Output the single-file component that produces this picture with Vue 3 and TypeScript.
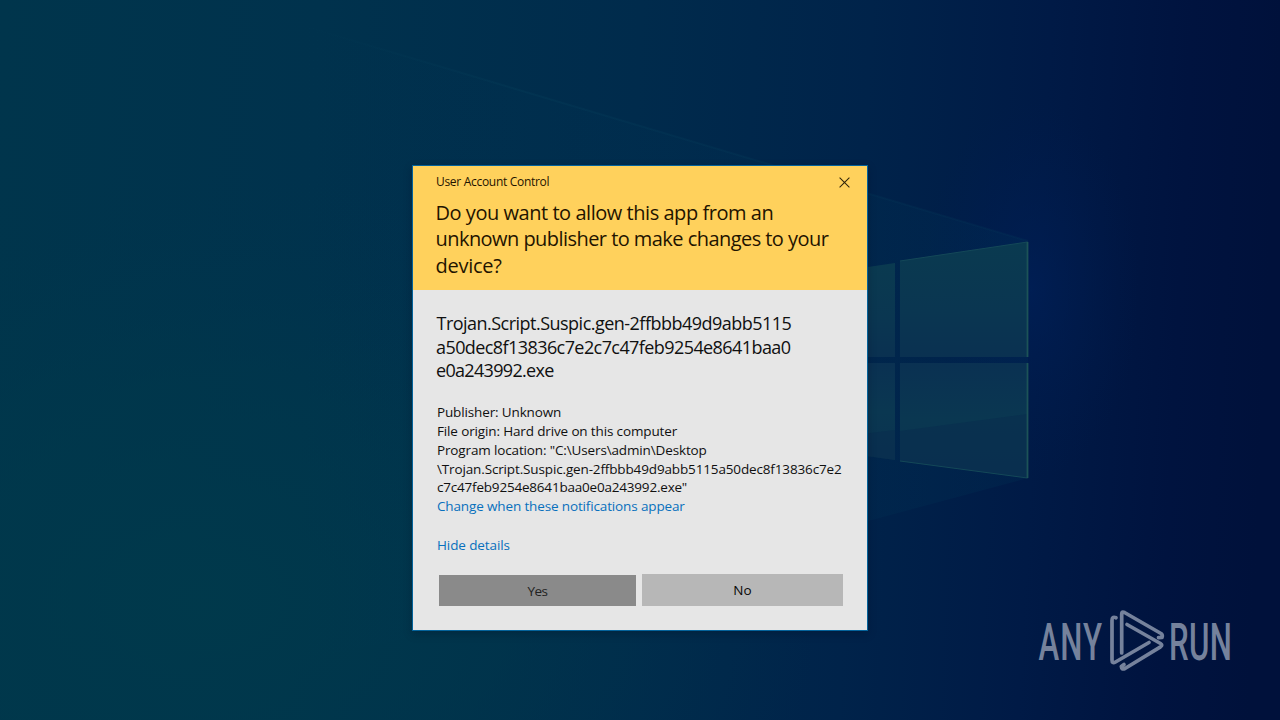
<script setup lang="ts">
const title: string[] = [
  'Do you want to allow this app from an',
  'unknown publisher to make changes to your',
  'device?',
]
const program: string[] = [
  'Trojan.Script.Suspic.gen-2ffbbb49d9abb5115',
  'a50dec8f13836c7e2c7c47feb9254e8641baa0',
  'e0a243992.exe',
]
const details: string[] = [
  'Publisher: Unknown',
  'File origin: Hard drive on this computer',
  'Program location: "C:\\Users\\admin\\Desktop',
  '\\Trojan.Script.Suspic.gen-2ffbbb49d9abb5115a50dec8f13836c7e2',
  'c7c47feb9254e8641baa0e0a243992.exe"',
]
</script>

<template>
  <main class="desktop">
    <svg class="wallpaper" viewBox="0 0 1280 720" aria-hidden="true">
      <defs>
        <linearGradient id="base" x1="0" y1="0" x2="1280" y2="60" gradientUnits="userSpaceOnUse">
          <stop offset="0" stop-color="#00354c" />
          <stop offset=".25" stop-color="#00324d" />
          <stop offset=".5" stop-color="#002b4c" />
          <stop offset=".68" stop-color="#00234a" />
          <stop offset=".82" stop-color="#001a46" />
          <stop offset=".93" stop-color="#00133f" />
          <stop offset="1" stop-color="#00113b" />
        </linearGradient>
        <radialGradient id="teal" cx="0" cy="0" r="1" gradientUnits="userSpaceOnUse" gradientTransform="translate(200 600) scale(620 430)">
          <stop offset="0" stop-color="#003a4b" stop-opacity=".85" />
          <stop offset=".5" stop-color="#00394b" stop-opacity=".5" />
          <stop offset="1" stop-color="#00344b" stop-opacity="0" />
        </radialGradient>
        <radialGradient id="glow" cx="0" cy="0" r="1" gradientUnits="userSpaceOnUse" gradientTransform="translate(1030 290) scale(110 190)">
          <stop offset="0" stop-color="#00205a" stop-opacity=".65" />
          <stop offset="1" stop-color="#001c50" stop-opacity="0" />
        </radialGradient>
        <linearGradient id="ray" x1="300" y1="0" x2="1030" y2="0" gradientUnits="userSpaceOnUse">
          <stop offset="0" stop-color="#003d5c" stop-opacity="0" />
          <stop offset="1" stop-color="#003857" stop-opacity=".22" />
        </linearGradient>
        <linearGradient id="edge" x1="300" y1="0" x2="1030" y2="0" gradientUnits="userSpaceOnUse">
          <stop offset="0" stop-color="#07435d" stop-opacity="0" />
          <stop offset=".3" stop-color="#07435d" stop-opacity=".25" />
          <stop offset="1" stop-color="#053a5a" stop-opacity=".2" />
        </linearGradient>
        <linearGradient id="pane" x1="0" y1="0" x2="0" y2="1">
          <stop offset="0" stop-color="#0a3a50" />
          <stop offset=".6" stop-color="#0a3651" />
          <stop offset="1" stop-color="#0a3151" />
        </linearGradient>
        <linearGradient id="lower-pane" x1="0" y1="0" x2="0" y2="1">
          <stop offset="0" stop-color="#0a3152" />
          <stop offset=".5" stop-color="#0a3751" />
          <stop offset="1" stop-color="#0a3350" />
        </linearGradient>
      </defs>
      <rect width="1280" height="720" fill="url(#base)" />
      <rect width="1280" height="720" fill="url(#teal)" />
      <rect width="1280" height="720" fill="url(#glow)" />
      <path d="M300 25 1028 241V478L500 620 0 720V0Z" fill="url(#ray)" />
      <path d="M300 25 1028 241" stroke="url(#edge)" stroke-width="2" />
      <g fill="url(#pane)">
        <path d="M780 280 895 263V357H780Z" />
        <path d="M900 261 1028 242V357H900Z" />
      </g>
      <g fill="url(#lower-pane)">
        <path d="M780 363H895V460L780 444Z" />
        <path d="M900 363H1028V478L900 461Z" />
      </g>
      <path d="M780 444 895 430V460ZM900 431 1028 414V478L900 461Z" fill="#082d4e" opacity=".6" />
      <path d="M900 261 1027.500 242M1027.500 478 900 461" fill="none" stroke="#144858" />
      <path d="M1027.500 242V357M1027.500 363V478" fill="none" stroke="#1c5357" stroke-width="1.8" />
    </svg>

    <section class="dialog" role="dialog" aria-label="User Account Control">
      <header class="head">
        <div class="bar">
          <span class="caption">User Account Control</span>
          <svg class="close" width="11" height="11" viewBox="0 0 11 11">
            <path d="M.6.6 10.4 10.4M10.4.6.6 10.4" fill="none" stroke="#30240b" stroke-width="1.05" />
          </svg>
        </div>
        <h1 class="title">
          <span v-for="line in title" :key="line" class="line">{{ line }}</span>
        </h1>
      </header>
      <div class="body">
        <div class="program">
          <span v-for="line in program" :key="line" class="line">{{ line }}</span>
        </div>
        <div class="details">
          <span v-for="line in details" :key="line" class="line">{{ line }}</span>
          <a class="line link">Change when these notifications appear</a>
        </div>
        <a class="line link hide">Hide details</a>
        <div class="actions">
          <button class="yes">Yes</button>
          <button class="no">No</button>
        </div>
      </div>
    </section>

    <svg class="brand" width="200" height="70" viewBox="1035 605 200 70">
      <g class="word">
        <text transform="translate(1038.500 659.500) scale(.6 1)" textLength="106" lengthAdjust="spacing">ANY</text>
        <text transform="translate(1169 659.500) scale(.6 1)" textLength="105" lengthAdjust="spacing">RUN</text>
      </g>
      <g class="mark">
        <path d="M1116 617.800Q1112 616 1112 620.500V660Q1112 664 1115.500 662L1149 642.500" />
        <path d="M1121.700 653V614Q1121.700 611 1124.500 612.500L1161 633.500Q1163 635 1162 637.500L1158.500 637.700" />
        <path d="M1127 624.500 1160.500 643.500Q1163 645 1160.500 646.800L1125 668.500Q1121.500 670 1121.300 666.500L1124 664.500" />
      </g>
    </svg>
  </main>
</template>

<style>
body {
  margin: 0;
  overflow: hidden;
}
</style>

<style scoped>
.desktop {
  position: relative;
  box-sizing: border-box;
  width: 1280px;
  height: 720px;
  padding: 165px 0 0 412px;
  overflow: hidden;
  font-family: "Open Sans", "Noto Sans", sans-serif;
  color: #101010;
}
.wallpaper {
  position: absolute;
  inset: 0;
  width: 1280px;
  height: 720px;
}
.dialog {
  position: relative;
  box-sizing: border-box;
  width: 456px;
  height: 466px;
  border: 1px solid #04639b;
  background: #e6e6e6;
  box-shadow: 0 3px 8px rgba(0, 10, 30, 0.25);
}
.head {
  box-sizing: border-box;
  height: 124px;
  padding: 6px 17px 0 23px;
  background: #ffd15c;
  color: #1f1400;
}
.bar {
  display: flex;
  align-items: center;
  justify-content: space-between;
  height: 20px;
}
.caption {
  margin-top: -1px;
  font-size: 12px;
  letter-spacing: -0.3px;
}
.line {
  display: block;
  width: max-content;
  white-space: pre;
}
.title {
  margin: 8px 0 0 -0.5px;
  font-size: 20px;
  font-weight: 400;
  line-height: 26.4px;
  letter-spacing: -0.46px;
}
.title .line:nth-child(2) {
  letter-spacing: -0.55px;
}
.title .line:nth-child(3) {
  letter-spacing: -0.25px;
}
.body {
  padding: 22px 24px 0;
}
.program {
  margin-left: -0.5px;
  font-size: 18px;
  line-height: 23.6px;
  letter-spacing: -0.52px;
}
.program .line:nth-child(n + 2) {
  margin-left: -0.5px;
  letter-spacing: -0.58px;
}
.program .line:nth-child(3) {
  letter-spacing: -0.68px;
}
.details {
  margin-top: 20px;
  font-size: 13.5px;
  line-height: 18.9px;
  letter-spacing: -0.14px;
}
.details .line:nth-child(5) {
  letter-spacing: -0.2px;
}
.link {
  color: #0870bd;
}
.hide {
  margin-top: 20px;
  font-size: 13.5px;
  line-height: 19px;
  letter-spacing: -0.1px;
}
.actions {
  display: flex;
  align-items: center;
  gap: 6px;
  margin: 19px 0 0 2px;
}
.actions button {
  padding: 0;
  border: 0;
  font: 13.5px "Open Sans", sans-serif;
}
.actions .yes {
  width: 197px;
  height: 31px;
  padding-top: 2px;
  background: #8a8a8a;
  color: #222;
  letter-spacing: -0.6px;
}
.actions .no {
  width: 201px;
  height: 32px;
  background: #b7b7b7;
  color: #080808;
}
.brand {
  position: absolute;
  left: 1035px;
  top: 605px;
}
.word {
  font: 500 52px Roboto, sans-serif;
  fill: #75829c;
}
.mark {
  fill: none;
  stroke: #75829c;
  stroke-width: 3.7px;
  stroke-linecap: round;
  stroke-linejoin: round;
}
</style>
